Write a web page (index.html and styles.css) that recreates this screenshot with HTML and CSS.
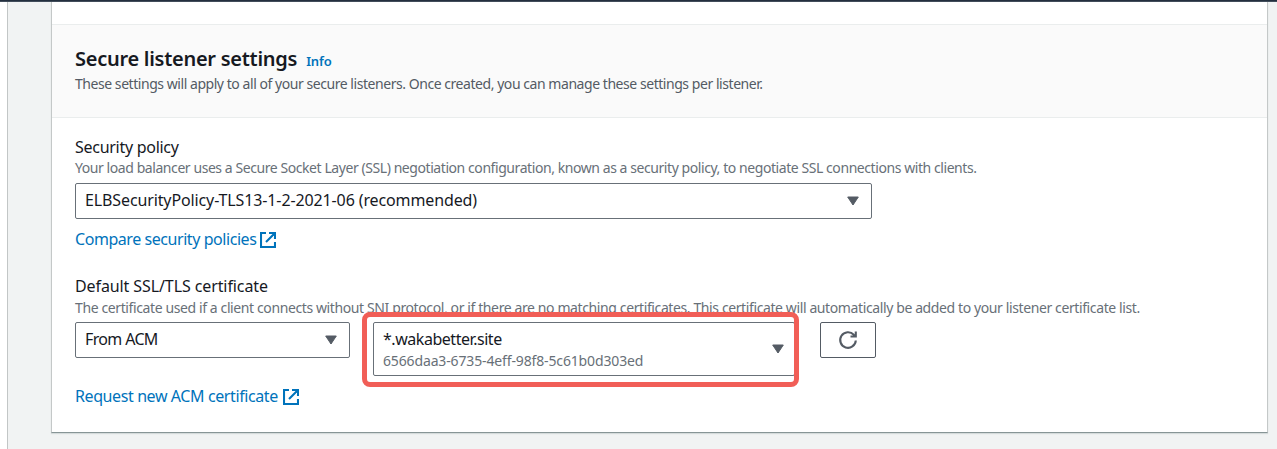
FILE: index.html
```html
<!DOCTYPE html>
<html lang="en">
<head>
<meta charset="utf-8">
<title>Secure listener settings</title>
<link rel="stylesheet" href="styles.css">
</head>
<body>
<div class="topbar"></div>
<div class="page">
  <div class="side"></div>
  <main class="content">
    <section class="card">
      <header class="card-header">
        <div class="heading"><h2 class="title"><span class="t-title">Secure listener settings</span></h2><a class="info"><span class="t-info">Info</span></a></div>
        <p class="desc"><span class="t-desc">These settings will apply to all of your secure listeners. Once created, you can manage these settings per listener.</span></p>
      </header>
      <div class="card-body">
        <div class="label"><span class="t-policy">Security policy</span></div>
        <div class="hint"><span class="t-policyhint">Your load balancer uses a Secure Socket Layer (SSL) negotiation configuration, known as a security policy, to negotiate SSL connections with clients.</span></div>
        <div class="select policy"><span class="t-elb">ELBSecurityPolicy-TLS13-1-2-2021-06 (recommended)</span><svg class="caret" viewBox="0 0 12 10"><path d="M.700 1h10.600L6 9z"/></svg></div>
        <a class="link"><span class="t-compare">Compare security policies</span><svg class="ext" viewBox="0 0 16 16"><path d="M6 1H1v14h14v-5M9 1h6v6M14.500 1.500L6 10"/></svg></a>
        <div class="label second"><span class="t-default">Default SSL/TLS certificate</span></div>
        <div class="hint cert-hint"><span class="t-certhint">The certificate used if a client connects without SNI protocol, or if there are no matching certificates. This certificate will automatically be added to your listener certificate list.</span></div>
        <div class="row">
          <div class="select source"><span class="t-acm">From ACM</span><svg class="caret" viewBox="0 0 12 10"><path d="M.700 1h10.600L6 9z"/></svg></div>
          <div class="cert-wrap">
            <div class="select cert"><div><div class="cert-name"><span class="t-waka">*.wakabetter.site</span></div><div class="cert-id"><span class="t-uuid">6566daa3-6735-4eff-98f8-5c61b0d303ed</span></div></div><svg class="caret" viewBox="0 0 12 10"><path d="M.700 1h10.600L6 9z"/></svg></div>
            <div class="highlight"></div>
          </div>
          <div class="refresh"><svg viewBox="0 0 20 20"><path d="M17.800 10.500a7.800 7.800 0 1 1-2-5.700L17 6M17.800 1.500v5h-5.300"/></svg></div>
        </div>
        <a class="link request"><span class="t-request">Request new ACM certificate</span><svg class="ext" viewBox="0 0 16 16"><path d="M6 1H1v14h14v-5M9 1h6v6M14.500 1.500L6 10"/></svg></a>
      </div>
    </section>
  </main>
</div>
</body>
</html>
```
FILE: styles.css
```css
* { box-sizing: border-box; }
body { margin: 0; height: 449px; overflow: hidden; background: #fff; color: #16191f; font-family: "Noto Sans", "Open Sans", sans-serif; font-size: 16px; }
.topbar { height: 2px; background: #232f3e; border-bottom: 1px solid #414c5a; }
.page { display: flex; height: 447px; }
.side { width: 8px; border-right: 1px solid #c2c6c6; }
.content { flex: 1; background: #f1f3f3; padding: 0 9px 0 43px; }
.card { height: 431px; background: #fff; border: 1px solid #c4c8c8; border-top: 0; border-bottom-color: #879596; box-shadow: 0 1px 1px #d5dbdb; padding-top: 22px; }
.card-header { height: 94px; background: #fafafa; border-top: 1px solid #eaeded; border-bottom: 1px solid #eaeded; padding: 19px 23px 0; }
.heading { display: flex; align-items: baseline; gap: 9px; height: 30px; line-height: 29px; }
.title { margin: 0; font-size: 20px; font-weight: 600; }
.info { color: #0073bb; font-size: 13px; font-weight: 600; }
.desc { margin: 0; font-size: 14px; line-height: 20px; color: #545b64; }
.card-body { padding: 18px 23px 0; }
span { white-space: nowrap; }
.label { height: 22px; line-height: 22px; }
.hint { height: 20px; line-height: 20px; font-size: 14px; color: #687078; }
.cert-hint { height: 21px; line-height: 22px; }
.select { display: flex; align-items: center; justify-content: space-between; border: 1px solid #687078; border-radius: 2px; background: #fff; height: 36px; padding: 0 12px 2px 9px; }
.policy, .source { padding-bottom: 3px; }
.caret { width: 12px; height: 10px; margin-top: 3px; }
.caret path { fill: #545b64; stroke: #545b64; stroke-linejoin: round; }
.policy { width: 797px; margin-top: 5px; }
.link { display: flex; align-items: center; gap: 4px; height: 22px; margin-top: 9px; color: #0073bb; }
.ext { width: 16px; height: 16px; margin-top: 2px; }
.request .ext { margin-left: 1px; }
.ext path { fill: none; stroke: #0073bb; stroke-width: 2.100; }
.second { margin-top: 25px; }
.row { display: flex; align-items: flex-start; height: 54px; margin-top: 4px; }
.source { width: 275px; }
.cert-wrap { position: relative; width: 422px; margin-left: 23px; }
.cert { height: 54px; padding: 0 10px 0 9px; }
.cert-name { height: 22px; line-height: 22px; }
.cert-id { height: 21px; line-height: 21px; font-size: 14px; color: #687078; }
.cert .caret { margin-top: 0; }
.highlight { position: absolute; left: -11px; top: -10px; width: 437px; height: 75px; border: 5px solid #f15e57; border-radius: 8px; }
.refresh { width: 56px; height: 36px; margin-left: 25px; border: 1px solid #545b64; border-radius: 2px; display: flex; align-items: center; justify-content: center; }
.refresh svg { width: 20px; height: 20px; }
.refresh path { fill: none; stroke: #545b64; stroke-width: 2.100; }
.t-title { letter-spacing: -.27px; }
.t-info { letter-spacing: -.1px; }
.t-desc { letter-spacing: -.45px; }
.t-policy { letter-spacing: -.28px; }
.t-policyhint { letter-spacing: -.43px; }
.t-elb { letter-spacing: -.12px; }
.t-compare { letter-spacing: -.44px; }
.t-default { letter-spacing: -.1px; }
.t-certhint { letter-spacing: -.39px; }
.t-acm { letter-spacing: -.65px; }
.t-waka { letter-spacing: -.46px; }
.t-uuid { letter-spacing: -.14px; }
.t-request { letter-spacing: -.4px; }
```
